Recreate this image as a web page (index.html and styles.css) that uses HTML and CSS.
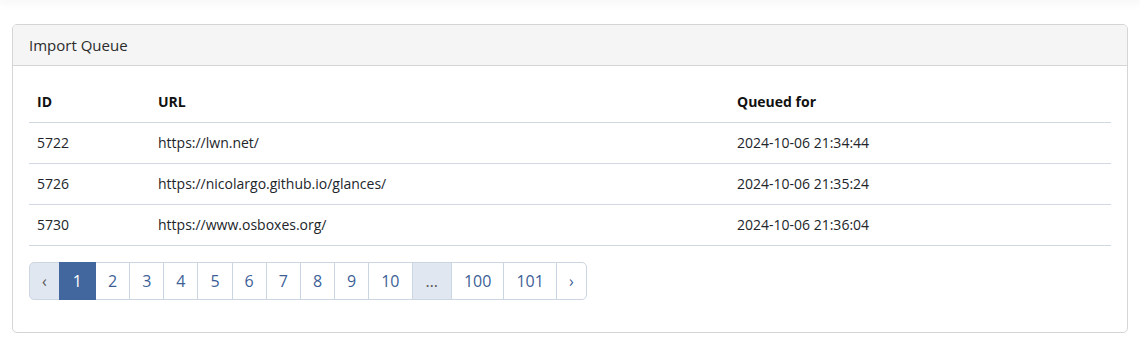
FILE: index.html
```
<!doctype html>
<html>
<head>
    <meta charset="utf-8">
    <title>Import Queue</title>
    <link rel="stylesheet" href="styles.css">
</head>
<body>
    <div class="topbar"></div>
    <div class="container">
        <div class="card">
            <div class="card-header">Import Queue</div>
            <div class="card-body">
                <table class="queue">
                    <thead>
                        <tr>
                            <th class="col-id">ID</th>
                            <th class="col-url">URL</th>
                            <th>Queued for</th>
                        </tr>
                    </thead>
                    <tbody>
                        <tr>
                            <td>5722</td>
                            <td>https://lwn.net/</td>
                            <td>2024-10-06 21:34:44</td>
                        </tr>
                        <tr>
                            <td>5726</td>
                            <td>https://nicolargo.github.io/glances/</td>
                            <td>2024-10-06 21:35:24</td>
                        </tr>
                        <tr>
                            <td>5730</td>
                            <td>https://www.osboxes.org/</td>
                            <td>2024-10-06 21:36:04</td>
                        </tr>
                    </tbody>
                </table>
                <ul class="pagination">
                    <li class="page-item disabled"><span class="page-link">&lsaquo;</span></li>
                    <li class="page-item active"><span class="page-link">1</span></li>
                    <li class="page-item"><a class="page-link" href="#">2</a></li>
                    <li class="page-item"><a class="page-link" href="#">3</a></li>
                    <li class="page-item"><a class="page-link" href="#">4</a></li>
                    <li class="page-item"><a class="page-link" href="#">5</a></li>
                    <li class="page-item"><a class="page-link" href="#">6</a></li>
                    <li class="page-item"><a class="page-link" href="#">7</a></li>
                    <li class="page-item"><a class="page-link" href="#">8</a></li>
                    <li class="page-item"><a class="page-link" href="#">9</a></li>
                    <li class="page-item"><a class="page-link" href="#">10</a></li>
                    <li class="page-item disabled"><span class="page-link gap">&hellip;</span></li>
                    <li class="page-item"><a class="page-link" href="#">100</a></li>
                    <li class="page-item"><a class="page-link" href="#">101</a></li>
                    <li class="page-item"><a class="page-link" href="#">&rsaquo;</a></li>
                </ul>
            </div>
        </div>
    </div>
</body>
</html>
```

FILE: styles.css
```
html, body {
    margin: 0;
    padding: 0;
}
body {
    background-color: white;
    font-family: "Open Sans", "Liberation Sans", sans-serif;
    font-size: 14px;
    color: #212529;
}
.topbar {
    height: 0;
    box-shadow: 0 0 10px 2px rgba(0, 0, 0, 0.08);
}
.container {
    padding: 24px 12px;
}
.card {
    border: 1px solid #d5d5d5;
    border-radius: 5px;
    overflow: hidden;
}
.card-header {
    background-color: #f5f5f5;
    border-bottom: 1px solid #d5d5d5;
    padding: 9px 16px;
    font-size: 15px;
    line-height: 22px;
    color: #2b2b2b;
}
.card-body {
    padding: 16px;
}
.queue {
    width: 100%;
    border-collapse: collapse;
    margin-bottom: 16px;
}
.queue th, .queue td {
    text-align: left;
    padding: 10px 8px;
    line-height: 20px;
    border-bottom: 1px solid #cfd8e3;
}
.queue th {
    font-weight: bold;
    color: #111;
}
.col-id {
    width: 105px;
}
.col-url {
    width: 563px;
}
.pagination {
    display: flex;
    list-style: none;
    margin: 0 0 16px 0;
    padding: 0;
}
.page-link {
    display: block;
    padding: 8px 12px;
    margin-left: -1px;
    font-size: 16px;
    line-height: 20px;
    color: #3d5f97;
    text-decoration: none;
    background-color: white;
    border: 1px solid #ccd5e2;
}
.page-item:first-child .page-link {
    margin-left: 0;
    border-radius: 5px 0 0 5px;
    padding: 8px 12px;
}
.page-item:last-child .page-link {
    border-radius: 0 5px 5px 0;
    padding: 8px 12px;
}
.page-item.active .page-link {
    padding: 8px 13px;
}
.page-item.disabled .page-link {
    background-color: #e1e7f0;
    color: #555;
}
.page-item.active .page-link {
    background-color: #42669e;
    border-color: #42669e;
    color: white;
    position: relative;
}
.gap {
    color: #777;
    padding: 8px 13px;
}
.page-item.disabled .gap {
    padding: 8px 13px;
}
```
